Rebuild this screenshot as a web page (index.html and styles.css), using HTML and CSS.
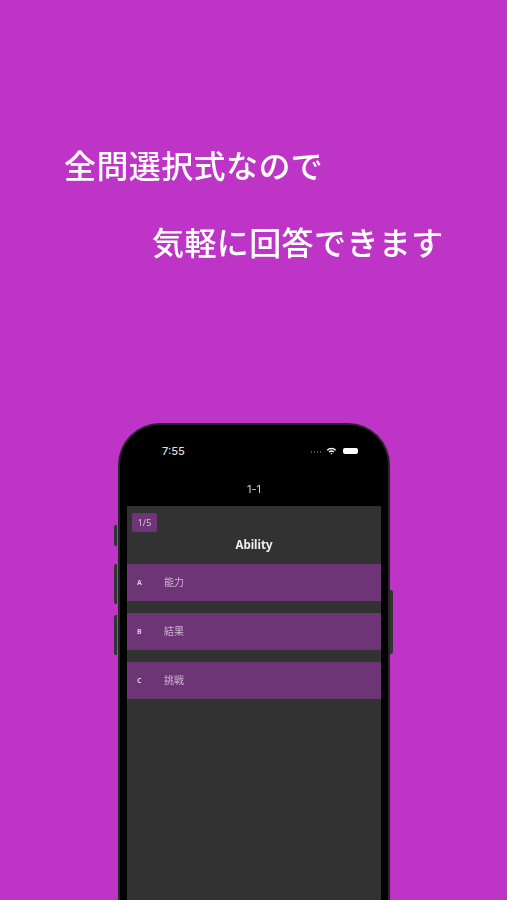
FILE: index.html
```html
<!DOCTYPE html>
<html lang="ja">
<head>
<meta charset="utf-8">
<title>全問選択式なので</title>
<link rel="stylesheet" href="styles.css">
</head>
<body>
<main class="page">
  <section class="headline">
    <p class="line line-first">全問選択式なので</p>
    <p class="line line-second">気軽に回答できます</p>
  </section>
  <section class="phone">
    <span class="side-btn btn-mute"></span>
    <span class="side-btn btn-up"></span>
    <span class="side-btn btn-down"></span>
    <span class="side-btn btn-power"></span>
    <div class="status">
      <span class="time">7:55</span>
      <span class="status-icons">
        <span class="signal"><i></i><i></i><i></i><i></i></span>
        <svg class="wifi" viewBox="0 0 12 9" width="11" height="8" aria-hidden="true">
          <path d="M0.6 3 A8 8 0 0 1 11.4 3 L10.2 4.3 A6.2 6.2 0 0 0 1.8 4.3 Z" fill="#fff"/>
          <path d="M2.7 5.1 A5 5 0 0 1 9.3 5.1 L8.1 6.3 A3.2 3.2 0 0 0 3.9 6.3 Z" fill="#fff"/>
          <path d="M4.8 7.1 A2 2 0 0 1 7.2 7.1 L6 8.5 Z" fill="#fff"/>
        </svg>
        <span class="battery"></span>
      </span>
    </div>
    <div class="nav-title">1-1</div>
    <div class="screen">
      <div class="badge-row"><span class="badge">1/5</span></div>
      <h1 class="word">Ability</h1>
      <ul class="choices">
        <li class="choice"><span class="letter">A</span><span class="answer">能力</span></li>
        <li class="choice"><span class="letter">B</span><span class="answer">結果</span></li>
        <li class="choice"><span class="letter">C</span><span class="answer">挑戦</span></li>
      </ul>
    </div>
  </section>
</main>
</body>
</html>
```

FILE: styles.css
```css
* { box-sizing: border-box; }
html, body { margin: 0; padding: 0; }
body {
  width: 507px;
  height: 900px;
  overflow: hidden;
  background: #be34c6;
  font-family: "Liberation Sans", "Noto Sans CJK JP", sans-serif;
}
.page {
  height: 900px;
  overflow: hidden;
  display: flex;
  flex-direction: column;
  filter: blur(0.35px);
}
.headline {
  height: 423px;
  flex: none;
  padding-top: 140px;
  display: flex;
  flex-direction: column;
  gap: 29px;
}
.line {
  margin: 0;
  height: 48px;
  line-height: 48px;
  font-family: "Noto Sans CJK JP", sans-serif;
  font-size: 32px;
  font-weight: 500;
  letter-spacing: 0.4px;
  color: #fff;
  white-space: nowrap;
}
.line-first { margin-left: 64px; }
.line-second { margin-left: 152px; }

.phone {
  position: relative;
  margin-left: 118px;
  width: 272px;
  height: 520px;
  flex: none;
  background: #000;
  border: 2px solid #262626;
  border-bottom: 0;
  border-radius: 42px 42px 0 0;
  padding: 0 7px;
  color: #fff;
}
.side-btn {
  position: absolute;
  width: 3px;
  background: #333;
}
.btn-mute { left: -6px; top: 100px; height: 21px; border-radius: 2px 0 0 2px; }
.btn-up { left: -6px; top: 139px; height: 40px; border-radius: 2px 0 0 2px; }
.btn-down { left: -6px; top: 190px; height: 40px; border-radius: 2px 0 0 2px; }
.btn-power { left: 270px; top: 165px; height: 64px; border-radius: 0 2px 2px 0; }

.status {
  height: 53px;
  padding: 20px 23px 0 35px;
  display: flex;
  justify-content: space-between;
  align-items: flex-start;
}
.time {
  font-family: "Inter", sans-serif;
  font-size: 11px;
  font-weight: 500;
  line-height: 13px;
  color: #ddd;
}
.status-icons {
  display: flex;
  align-items: center;
  gap: 5px;
  height: 12px;
}
.signal { display: flex; gap: 1.5px; margin-right: 0; margin-top: 2px; }
.signal i { width: 1.5px; height: 1.5px; background: #555; }
.wifi { margin-right: 1px; }
.battery {
  width: 15px;
  height: 6px;
  border-radius: 2px;
  background: #fff;
}
.nav-title {
  height: 28px;
  padding-top: 3px;
  line-height: 16px;
  text-align: center;
  font-family: "Inter", sans-serif;
  font-size: 11px;
  color: #ccc;
}
.screen {
  height: 439px;
  background: #323232;
  padding-top: 6px;
}
.badge-row { padding-left: 5px; height: 19px; }
.badge {
  display: inline-block;
  width: 25px;
  height: 19px;
  border-radius: 2px;
  background: #6f3479;
  color: #d9c4dc;
  font-family: "Noto Sans", sans-serif;
  font-size: 9px;
  line-height: 19px;
  text-align: center;
}
.word {
  margin: 5px 0 0;
  height: 18px;
  line-height: 18px;
  text-align: center;
  font-family: "Noto Sans", sans-serif;
  font-size: 11.5px;
  font-weight: 700;
  color: #eee;
}
.choices {
  list-style: none;
  margin: 10px 0 0;
  padding: 0;
  display: flex;
  flex-direction: column;
  gap: 12.5px;
}
.choice {
  height: 36.5px;
  background: #6d3575;
  display: flex;
  align-items: center;
  padding-left: 10px;
}
.letter {
  width: 27px;
  font-family: "Noto Sans", sans-serif;
  font-size: 7px;
  font-weight: 700;
  color: #ddc9e0;
}
.answer {
  font-family: "Noto Sans CJK JP", sans-serif;
  font-size: 10px;
  color: #cdb6d1;
  margin-top: -1px;
}
```
